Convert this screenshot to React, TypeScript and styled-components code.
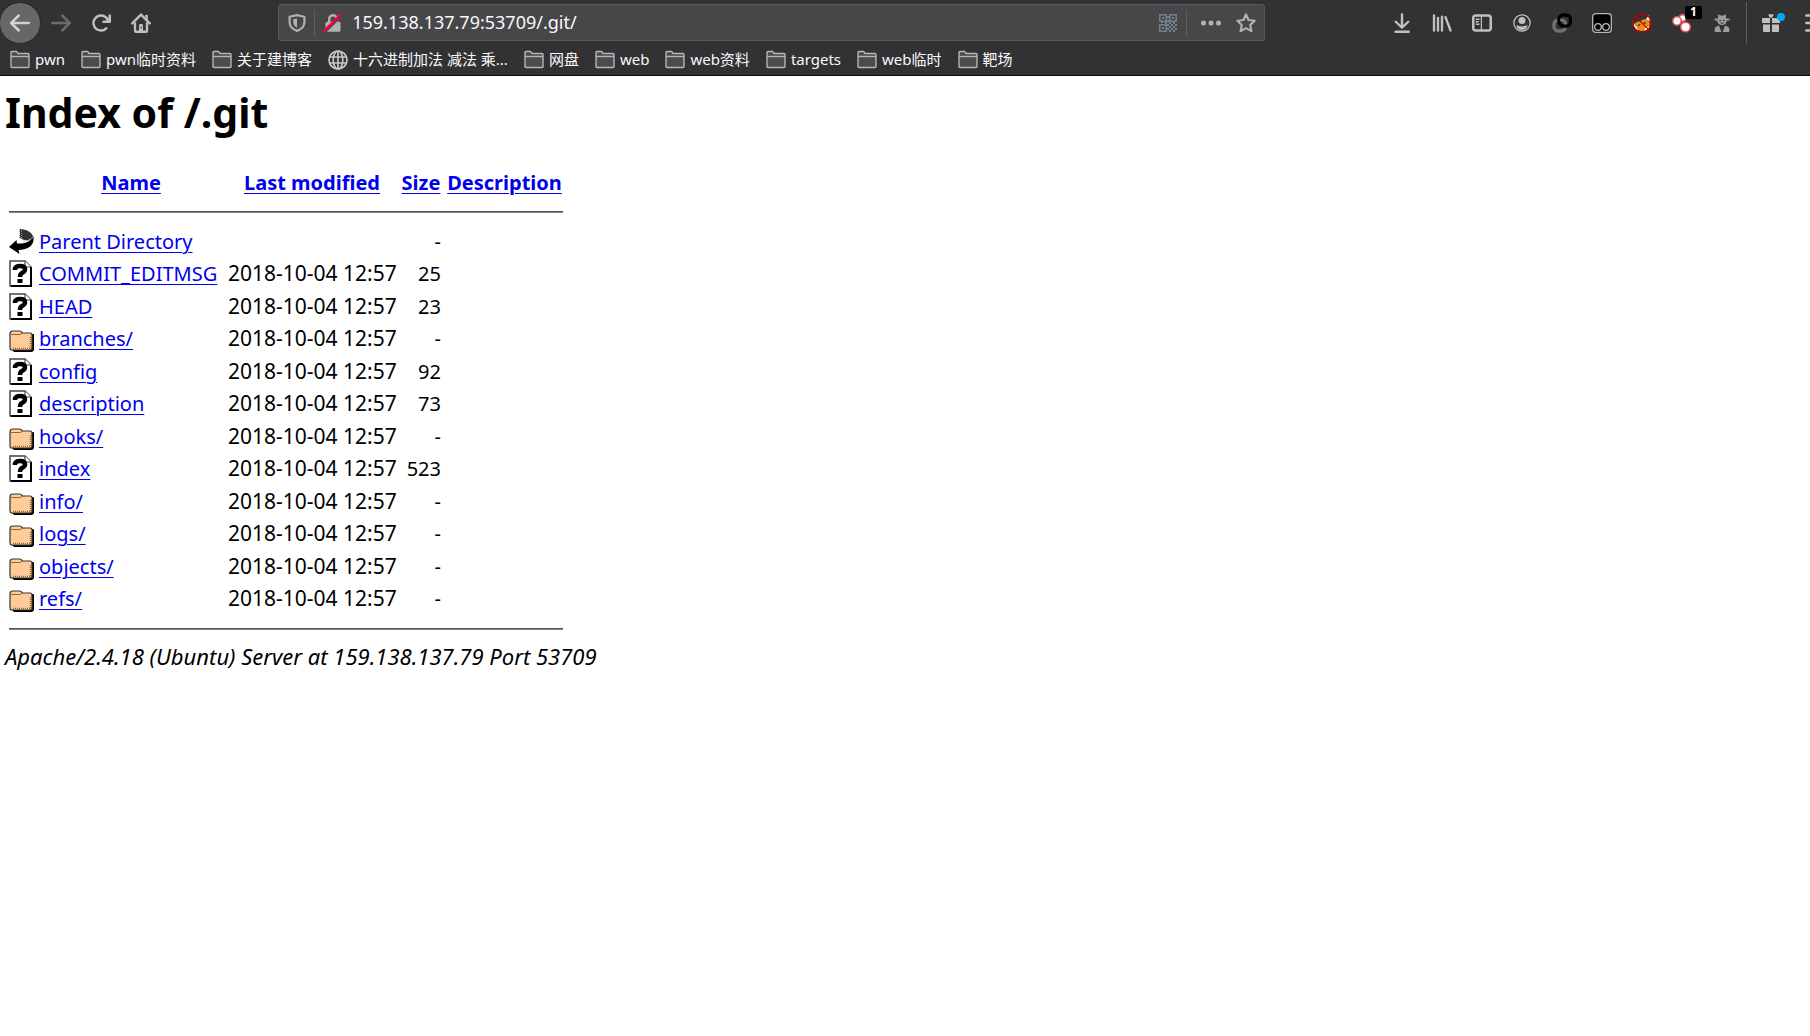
import React from "react";
import styled, { createGlobalStyle, css } from "styled-components";

const GlobalStyle = createGlobalStyle`
  body {
    margin: 0;
    background: #ffffff;
    color: #000000;
    font-family: "Noto Sans", "Noto Sans CJK SC", sans-serif;
    font-size: 20px;
    line-height: 27px;
    overflow-x: hidden;
  }
`;

/* ---------- browser chrome ---------- */

const Chrome = styled.header`
  background: #323234;
  border-bottom: 1px solid #0c0c0d;
  overflow: hidden;
`;

const Toolbar = styled.nav`
  display: flex;
  align-items: center;
  height: 45px;
`;

const Group = styled.div`
  display: flex;
  align-items: center;
  flex: none;
`;

const Spacer = styled.div`
  flex: 5 1 0;
`;

const ToolButton = styled.button<{ $round?: boolean; $dim?: boolean }>`
  display: flex;
  align-items: center;
  justify-content: center;
  position: relative;
  flex: none;
  width: 40px;
  height: 40px;
  padding: 0;
  border: 0;
  background: none;
  color: ${(p) => (p.$dim ? "#6c6c6e" : "#c0c0c1")};
  ${(p) =>
    p.$round &&
    css`
      margin-right: 1px;
      border-radius: 50%;
      background: #676768;
      box-shadow: 0 0 0 1px #2a2a2c;
      color: #d2d2d3;
    `}
`;

const MenuButton = styled(ToolButton)`
  width: 17px;
  padding-left: 12px;
  justify-content: flex-start;
  overflow: hidden;
`;

const Badge = styled.span`
  position: absolute;
  top: 3px;
  right: 0;
  width: 17px;
  height: 13px;
  border-radius: 2px;
  background: #000000;
  color: #ffffff;
  font: bold 12px/12px "Noto Sans", sans-serif;
  text-align: center;
`;

const Separator = styled.span<{ $kind?: "tall" | "actions" }>`
  flex: none;
  width: 1px;
  height: ${(p) => (p.$kind === "tall" ? "42px" : "26px")};
  margin: ${(p) => (p.$kind === "tall" ? "0 6px 0 4px" : p.$kind === "actions" ? "0 7px 0 0" : "0")};
  background: #5e5e61;
`;

const AddressBar = styled.form`
  display: flex;
  align-items: center;
  flex: 42 1 0;
  min-width: 0;
  box-sizing: border-box;
  height: 37px;
  border: 1px solid #5a5a5c;
  border-radius: 3px;
  background: #474749;
`;

const BarButton = styled(ToolButton)`
  width: 35px;
  height: 35px;
  color: #b1b1b3;
`;

const UrlInput = styled.input`
  flex: 1;
  min-width: 0;
  height: 35px;
  box-sizing: border-box;
  margin: 0;
  padding: 0 0 2px 2px;
  border: 0;
  outline: 0;
  background: none;
  color: #f9f9fa;
  font: 18px/24px "Noto Sans", sans-serif;
`;

const Bookmarks = styled.nav`
  display: flex;
  align-items: center;
  gap: 16px;
  height: 30px;
  padding: 0 10px;
`;

const Bookmark = styled.button`
  display: flex;
  align-items: center;
  gap: 5px;
  flex: none;
  height: 30px;
  padding: 0;
  border: 0;
  background: none;
  color: #f9f9fa;
  font: 15px/20px "Noto Sans", "Noto Sans CJK SC", sans-serif;
  white-space: nowrap;
`;

const BookmarkLabel = styled.span`
  padding-bottom: 2px;
`;

const Svg = styled.svg`
  display: block;
  flex: none;
`;

type IconProps = { children: React.ReactNode; w?: number; h?: number; box?: string };
const Icon = ({ children, w = 20, h = 20, box = "0 0 16 16" }: IconProps) => (
  <Svg width={w} height={h} viewBox={box} fill="none" stroke="currentColor" aria-hidden="true">
    {children}
  </Svg>
);

const arrow =
  "M15 7H3.414l4.293-4.293a1 1 0 0 0-1.414-1.414l-6 6a1 1 0 0 0 0 1.414l6 6a1 1 0 0 0 1.414-1.414L3.414 9H15a1 1 0 0 0 0-2z";

const BackIcon = () => (
  <Icon><path d={arrow} fill="currentColor" stroke="none" /></Icon>
);
const ForwardIcon = () => (
  <Icon><path d={arrow} fill="currentColor" stroke="none" transform="matrix(-1 0 0 1 16 0)" /></Icon>
);
const ReloadIcon = () => (
  <Icon>
    <path
      fill="currentColor"
      stroke="none"
      d="M15 1a1 1 0 0 0-1 1v2.418A6.995 6.995 0 1 0 8 15a6.954 6.954 0 0 0 4.95-2.05 1 1 0 0 0-1.414-1.414A5.019 5.019 0 1 1 12.549 6H10a1 1 0 0 0 0 2h5a1 1 0 0 0 1-1V2a1 1 0 0 0-1-1z"
    />
  </Icon>
);
const HomeIcon = () => (
  <Icon>
    <path d="M1 8.3 8 1.3l7 7" strokeWidth="1.9" strokeLinecap="round" strokeLinejoin="round" />
    <path d="M3.2 7.5v6.600q0 .9.9.9h7.800q.9 0 .9-.9V7.500" strokeWidth="1.9" />
    <path d="M11.2 2.200h1.600v3" strokeWidth="1.4" />
    <path d="M6.400 15V9.700q0-1 1-1h1.200q1 0 1 1V15z" fill="currentColor" stroke="none" />
    <path d="M8.200 11v1.200" stroke="#323234" strokeWidth="1" />
  </Icon>
);
const ShieldIcon = () => (
  <Icon w={18} h={18}>
    <path d="M8 1 14.6 2.4v4.800c0 3.800-2.600 6.400-6.600 7.800-4-1.400-6.600-4-6.600-7.800V2.400z" strokeWidth="1.9" strokeLinejoin="round" />
    <path d="M8 4v8.200C5.600 11 4.700 9.500 4.700 7.400V4.700z" fill="currentColor" stroke="none" />
  </Icon>
);
const LockIcon = () => (
  <Icon>
    <path d="M5 7.500V4.800a3 3 0 0 1 6 0v2.700" strokeWidth="2" />
    <rect x="2" y="7" width="12" height="8" rx="1.2" fill="currentColor" stroke="none" />
    <path d="M1.500 15 15 1.500" stroke="#474749" strokeWidth="2.400" />
    <path d="M1 14.300 13.800 1.500" stroke="#ff0039" strokeWidth="1.9" strokeLinecap="round" />
  </Icon>
);

const QrIcon = () => (
  <Icon w={18} h={18} box="0 0 18 18">
    <g stroke="#77828e" strokeWidth="1.500">
      <rect x=".8" y=".8" width="6.400" height="6.400" />
      <rect x="10.800" y=".8" width="6.400" height="6.400" />
      <rect x=".8" y="10.800" width="6.400" height="6.400" />
    </g>
    <g fill="#77828e" stroke="none">
      <path d="M3 3h2v2H3zM13 3h2v2h-2zM3 13h2v2H3z" />
      <path d="M8 2h2v2H8zM8 6h2v2H8zM6 8h2v2H6zM10 8h2v2h-2zM2 8h2v1H2zM14 8h2v2h-2zM8 10h2v2H8zM12 10h2v2h-2zM16 10h2v2h-2zM10 12h2v2h-2zM14 12h2v2h-2zM8 14h2v2H8zM12 14h2v2h-2zM16 14h2v2h-2zM10 16h2v2h-2zM14 16h2v2h-2z" />
    </g>
  </Icon>
);
const DotsIcon = () => (
  <Icon>
    <g fill="currentColor" stroke="none">
      <circle cx="2" cy="8" r="2" />
      <circle cx="8" cy="8" r="2" />
      <circle cx="14" cy="8" r="2" />
    </g>
  </Icon>
);
const StarIcon = () => (
  <Icon>
    <path d="m8 1.200 2 4.400 4.900.6-3.500 3.400.9 4.900L8 12.100l-4.300 2.400.9-4.900L1.100 6.200 6 5.600z" strokeWidth="1.800" strokeLinejoin="round" />
  </Icon>
);
const DownloadIcon = () => (
  <Icon>
    <path d="M8 1v10.500M3 7l5 4.800L13 7M2.800 15h10.600" strokeWidth="1.900" strokeLinecap="round" strokeLinejoin="round" />
  </Icon>
);
const LibraryIcon = () => (
  <Icon>
    <path d="M1.600 2v12M4.800 4v10M8 3v11M10.800 3.300 14.800 14" strokeWidth="1.900" strokeLinecap="round" />
  </Icon>
);
const SidebarIcon = () => (
  <Icon>
    <rect x="1" y="2" width="14" height="12" rx="2" strokeWidth="2" />
    <path d="M7.500 2v12" strokeWidth="1" />
    <path d="M3 5h3M3 7h2.400M3 9h3" strokeWidth="1.100" />
  </Icon>
);
const AccountIcon = () => (
  <Icon>
    <circle cx="8" cy="8" r="6.500" strokeWidth="1" />
    <circle cx="8" cy="6" r="2.800" fill="currentColor" stroke="none" />
    <path d="M3.500 9.700c1.400.2 2.400 1 4.500 1s3.100-.8 4.500-1c-.2 2.200-2 3.800-4.500 3.800s-4.300-1.600-4.500-3.800z" fill="currentColor" stroke="none" />
  </Icon>
);
const LinkIcon = () => (
  <Icon box="0 0 20 20">
    <rect x="2" y="7" width="11.500" height="11" rx="4.500" stroke="#707072" strokeWidth="3.500" />
    <rect x="7" y="2" width="11.500" height="11" rx="4.500" stroke="#000000" strokeWidth="3.500" />
    <path d="M8 7h1q4.500 0 4.500 4.500" stroke="#707072" strokeWidth="2.500" />
  </Icon>
);
const MonkeyIcon = () => (
  <Icon box="0 0 20 20">
    <rect x=".7" y=".7" width="18.600" height="18.600" rx="3" fill="#000000" stroke="#b8b8b8" strokeWidth="1.300" />
    <circle cx="6" cy="14" r="3.300" stroke="#b8b8b8" strokeWidth="1.300" />
    <circle cx="14" cy="14" r="3.300" stroke="#b8b8b8" strokeWidth="1.300" />
  </Icon>
);
const FoxIcon = () => (
  <Icon box="0 0 20 20">
    <path d="M3 10c3-2 5-1 7-3 2-1 4-1 6-1 2 3 2 6 1 8-2 3-5 4-8 4-4-1-6-4-6-8z" fill="#e88b1f" stroke="none" />
    <path d="m14 6 3-4 .8 6zM1.500 10c2 2 2.500 4 5 7-3-.5-5-3-5-7zM12 17.500c3-.5 4.500-2 5.500-4l-4 1z" fill="#ffffff" stroke="none" />
    <path d="m5 12 3.500-1-1 2zM11 10l3-1-1 2.300z" fill="#3b2313" stroke="none" />
    <circle cx="10" cy="10" r="9.200" stroke="#c40000" strokeWidth="1.300" />
    <path d="m3.600 3.600 12.800 12.800" stroke="#c40000" strokeWidth="1.300" />
  </Icon>
);
const BubblesIcon = () => (
  <Icon box="0 0 20 20">
    <g fill="#ffffff" stroke="#e0535a" strokeWidth="1.600">
      <circle cx="10.500" cy="5" r="3.400" />
      <circle cx="5" cy="8" r="4.200" />
      <circle cx="13.500" cy="14" r="4.800" />
    </g>
  </Icon>
);
const SpyIcon = () => (
  <Icon w={16} h={18} box="0 0 16 18">
    <g fill="#9b9b9c" stroke="none">
      <path d="M4 0 6 1.500h4L12 0v4.500h3.500v2H13C12.500 9.500 10.500 11 8 11S3.500 9.500 3 6.500H.5v-2H4z" />
      <path d="M.7 18v-3q0-2 2-2.500L5 11.500 7.300 18zM15.300 18v-3q0-2-2-2.500L11 11.500 8.700 18z" />
    </g>
    <path d="M5.500 6.500H7M9 6.500h1.500M6.500 9h3" stroke="#323234" strokeWidth="1" />
  </Icon>
);
const GiftIcon = () => (
  <Icon w={24} h={20} box="0 0 24 20">
    <g fill="#c0c0c1" stroke="none">
      <path d="M10 5C7 3.500 7 1 8.500 1 9.500 1 10 2 10 2s.5-1 1.500-1C13 1 13 3.500 10 5z" />
      <path d="M2 5h7v5H1V6q0-1 1-1zM11 5h7q1 0 1 1v4h-8zM2 11.500h7V19H3q-1 0-1-1zM11 11.500h7V18q0 1-1 1h-6z" />
    </g>
    <circle cx="20" cy="4" r="4" fill="#00a8f8" stroke="none" />
  </Icon>
);
const MenuIcon = () => (
  <Icon><path d="M1 2h14M1 8h14M1 14h14" strokeWidth="1.900" strokeLinecap="round" /></Icon>
);
const BookmarkFolderIcon = () => (
  <Icon box="0 0 20 20">
    <path d="M1 16.500V2.500q0-1 1-1h4q1 0 1.500 1L8 3.500h10q1 0 1 1v12q0 1-1 1H2q-1 0-1-1z" fill="#4c4c4e" stroke="#b6b6b7" strokeWidth="1.400" />
    <path d="M1 6.500h18" stroke="#b6b6b7" strokeWidth="1.400" />
  </Icon>
);
const GlobeIcon = () => (
  <Icon box="0 0 20 20">
    <g stroke="#c8c8c9" strokeWidth="1.700">
      <circle cx="10" cy="10" r="9" />
      <ellipse cx="10" cy="10" rx="4.800" ry="9" />
      <path d="M10 1v18M1.500 7h17M1.500 13h17" />
    </g>
  </Icon>
);

/* ---------- directory listing ---------- */

const Page = styled.main`
  padding: 9px 5px 16px;
`;

const Title = styled.h1`
  margin: 0 0 26px;
  font-size: 41px;
  line-height: 54px;
  font-weight: 700;
`;

const Listing = styled.table`
  table-layout: fixed;
  width: 562px;
  border-collapse: separate;
  border-spacing: 3px;

  th,
  td {
    padding: 1px;
    white-space: nowrap;
    vertical-align: top;
  }
  tbody tr {
    height: 29px;
  }
  tbody tr:nth-child(even) {
    height: 30px;
  }
`;

const Col = styled.col<{ $w: number }>`
  width: ${(p) => p.$w}px;
`;

const Num = styled.td<{ $date?: boolean }>`
  text-align: right;
  font-size: ${(p) => (p.$date ? "21px" : "20px")};
`;

const Rule = styled.hr`
  margin: 10px 0;
  border: 0;
  height: 1px;
  border-top: 1px solid #555555;
  background: #808080;
`;

const Link = styled.a`
  color: #0000ee;
  text-decoration: underline;
  text-decoration-thickness: 1px;
  text-underline-offset: 3px;
`;

const Footer = styled.address`
  font-size: 22px;
  line-height: 25px;
  font-style: italic;
`;

const UnknownIcon = () => (
  <Svg width="25" height="27" viewBox="0 0 25 27" role="img" aria-label="[   ]">
    <path d="M1 1h15l6 6v19H1z" fill="#ffffff" stroke="#444444" strokeWidth="1.500" />
    <path d="M2 26h20V7" fill="none" stroke="#000000" strokeWidth="2" />
    <path d="M16 1v6h6" fill="#ffffff" stroke="#444444" strokeWidth="1.200" />
    <path d="M6 10V8.500q1-2.500 5-2.500 5 0 5 3.500 0 2-3 3.500-2 1-2 4" fill="none" stroke="#000000" strokeWidth="4.500" />
    <path d="M8.500 19h5v4h-5z" fill="#000000" />
  </Svg>
);
const FolderIcon = () => (
  <Svg width="25" height="27" viewBox="0 0 25 27" role="img" aria-label="[DIR]">
    <path d="M3 25V9h21q1 0 1 1v14q0 3-3 3H5z" fill="#000000" />
    <path d="M1 9q0-3 3-3h6q3 0 3 2h8q2 0 2 2v13q0 2-2 2H3q-2 0-2-2z" fill="#ffcc99" stroke="#333333" strokeWidth="1.200" />
    <path d="M2 9.500h9q1.500 0 2-1.500" fill="none" stroke="#996633" strokeWidth="1" />
    <path d="M4 23.500h17M21.500 23V12" fill="none" stroke="#996633" strokeWidth="1.500" strokeDasharray="1 1" />
  </Svg>
);
const ParentIcon = () => (
  <Svg width="25" height="27" viewBox="0 0 25 27" role="img" aria-label="[PARENTDIR]">
    <path d="M11 1c7 0 13 4 13.500 9-2.500 2-6 3-9.500 2l-4-2z" fill="#333333" />
    <path d="M10.500 1v10M12.500 1v10" stroke="#999999" strokeWidth="1" strokeDasharray="1 1" />
    <path d="M24.500 8.500c1 8-4 13-15 13.500l1 4L0 19l7.500-7 .5 3.500c7 .5 13-1.500 16.500-7z" fill="#000000" />
    <path d="M14 13.500c4-.5 8-2 10.500-5" fill="none" stroke="#cccccc" strokeWidth="1" strokeDasharray="2 1" />
  </Svg>
);

type Kind = "parent" | "file" | "dir";
const ICONS: Record<Kind, React.FC> = { parent: ParentIcon, file: UnknownIcon, dir: FolderIcon };
const DATE = "2018-10-04 12:57";
const ENTRIES: { kind: Kind; name: string; date: string; size: string }[] = [
  { kind: "parent", name: "Parent Directory", date: "", size: "-" },
  { kind: "file", name: "COMMIT_EDITMSG", date: DATE, size: "25" },
  { kind: "file", name: "HEAD", date: DATE, size: "23" },
  { kind: "dir", name: "branches/", date: DATE, size: "-" },
  { kind: "file", name: "config", date: DATE, size: "92" },
  { kind: "file", name: "description", date: DATE, size: "73" },
  { kind: "dir", name: "hooks/", date: DATE, size: "-" },
  { kind: "file", name: "index", date: DATE, size: "523" },
  { kind: "dir", name: "info/", date: DATE, size: "-" },
  { kind: "dir", name: "logs/", date: DATE, size: "-" },
  { kind: "dir", name: "objects/", date: DATE, size: "-" },
  { kind: "dir", name: "refs/", date: DATE, size: "-" },
];

const BOOKMARKS = ["pwn", "pwn临时资料", "关于建博客", "十六进制加法 减法 乘...", "网盘", "web", "web资料", "targets", "web临时", "靶场"];

const EXTENSIONS: { label: string; icon: React.FC; badge?: string }[] = [
  { label: "Downloads", icon: DownloadIcon },
  { label: "Library", icon: LibraryIcon },
  { label: "Sidebars", icon: SidebarIcon },
  { label: "Account", icon: AccountIcon },
  { label: "Proxy", icon: LinkIcon },
  { label: "Scripts", icon: MonkeyIcon },
  { label: "Fox", icon: FoxIcon },
  { label: "Requests", icon: BubblesIcon, badge: "1" },
  { label: "Agent", icon: SpyIcon },
];

export default function App() {
  return (
    <>
      <GlobalStyle />
      <Chrome>
        <Toolbar aria-label="Navigation">
          <Group>
            <ToolButton $round aria-label="Back"><BackIcon /></ToolButton>
            <ToolButton $dim aria-label="Forward"><ForwardIcon /></ToolButton>
            <ToolButton aria-label="Reload"><ReloadIcon /></ToolButton>
            <ToolButton aria-label="Home"><HomeIcon /></ToolButton>
          </Group>
          <Spacer />
          <AddressBar onSubmit={(e) => e.preventDefault()}>
            <BarButton type="button" aria-label="Protections"><ShieldIcon /></BarButton>
            <Separator />
            <BarButton type="button" aria-label="Connection"><LockIcon /></BarButton>
            <UrlInput aria-label="Address" defaultValue="159.138.137.79:53709/.git/" spellCheck={false} />
            <BarButton type="button" aria-label="QR code"><QrIcon /></BarButton>
            <Separator $kind="actions" />
            <BarButton type="button" aria-label="Page actions"><DotsIcon /></BarButton>
            <BarButton type="button" aria-label="Bookmark this page"><StarIcon /></BarButton>
          </AddressBar>
          <Spacer />
          <Group>
            {EXTENSIONS.map(({ label, icon: Glyph, badge }) => (
              <ToolButton key={label} aria-label={label}>
                <Glyph />
                {badge && <Badge>{badge}</Badge>}
              </ToolButton>
            ))}
            <Separator $kind="tall" />
            <ToolButton aria-label="What's new"><GiftIcon /></ToolButton>
            <MenuButton aria-label="Menu"><MenuIcon /></MenuButton>
          </Group>
        </Toolbar>
        <Bookmarks aria-label="Bookmarks">
          {BOOKMARKS.map((name, i) => (
            <Bookmark key={name}>
              {i === 3 ? <GlobeIcon /> : <BookmarkFolderIcon />}
              <BookmarkLabel>{name}</BookmarkLabel>
            </Bookmark>
          ))}
        </Bookmarks>
      </Chrome>
      <Page>
        <Title>Index of /.git</Title>
        <Listing>
          <colgroup>
            <Col $w={27} />
            <Col $w={186} />
            <Col $w={170} />
            <Col $w={42} />
            <Col $w={119} />
          </colgroup>
          <thead>
            <tr>
              <td />
              <th scope="col"><Link href="#name">Name</Link></th>
              <th scope="col"><Link href="#modified">Last modified</Link></th>
              <th scope="col"><Link href="#size">Size</Link></th>
              <th scope="col"><Link href="#description">Description</Link></th>
            </tr>
            <tr><td colSpan={5}><Rule /></td></tr>
          </thead>
          <tbody>
            {ENTRIES.map(({ kind, name, date, size }) => {
              const Glyph = ICONS[kind];
              return (
                <tr key={name}>
                  <td><Glyph /></td>
                  <td><Link href={`#${name}`}>{name}</Link></td>
                  <Num $date>{date}</Num>
                  <Num>{size}</Num>
                  <td />
                </tr>
              );
            })}
          </tbody>
          <tfoot>
            <tr><td colSpan={5}><Rule /></td></tr>
          </tfoot>
        </Listing>
        <Footer>Apache/2.4.18 (Ubuntu) Server at 159.138.137.79 Port 53709</Footer>
      </Page>
    </>
  );
}
